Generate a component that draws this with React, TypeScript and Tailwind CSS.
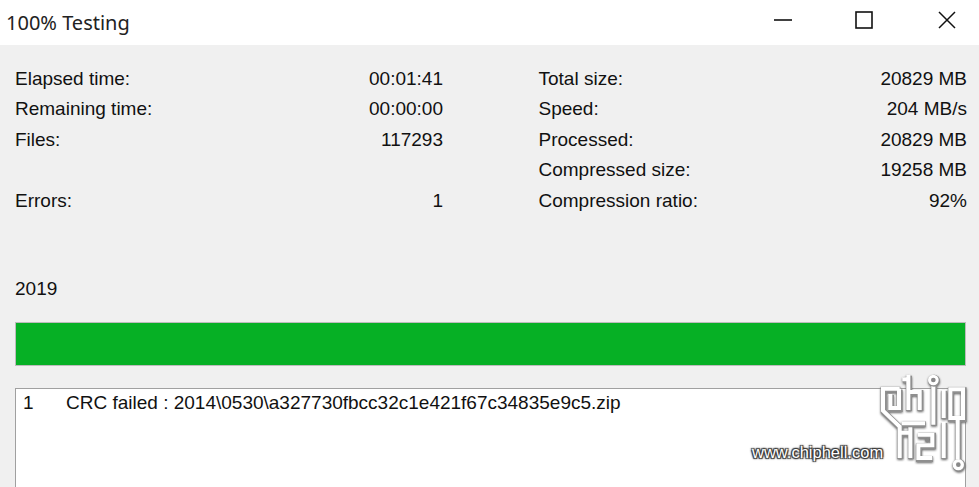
import React from "react";

const left = [
  ["Elapsed time:", "00:01:41"],
  ["Remaining time:", "00:00:00"],
  ["Files:", "117293"],
  ["", ""],
  ["Errors:", "1"],
];
const right = [
  ["Total size:", "20829 MB"],
  ["Speed:", "204 MB/s"],
  ["Processed:", "20829 MB"],
  ["Compressed size:", "19258 MB"],
  ["Compression ratio:", "92%"],
];

function Rows({ rows, className }: { rows: string[][]; className: string }) {
  return (
    <div className={className}>
      {rows.map((r, i) => (
        <div key={i} className="flex justify-between h-[30.4px] leading-[30px]">
          <span>{r[0]}</span>
          <span>{r[1]}</span>
        </div>
      ))}
    </div>
  );
}

function Logo() {
  const d =
    "M74 62H24V128L74 176V270M72 62V120H46V78M100 20V126M100 72H134V126M82 34H100M175 40V170M206 66V150M226 64H264V150H226ZM80 166H150M106 178V270M74 194H106M128 200H172V232H130V270H172M206 162V270M248 156V286";
  return (
    <svg
      className="absolute left-[875px] top-[368px] drop-shadow-[0.5px_1px_1px_#666]"
      width="100"
      height="108"
      viewBox="0 0 300 324"
      fill="none"
    >
      <path d={d} stroke="#8f8f8f" strokeWidth="18" transform="translate(2 3)" />
      <path d={d} stroke="#fff" strokeWidth="12" />
      <circle cx="177" cy="38" r="18" fill="#8f8f8f" />
      <circle cx="175" cy="36" r="16" fill="#fff" />
      <circle cx="175" cy="36" r="7" fill="#888" />
      <circle cx="252" cy="292" r="19" fill="#8f8f8f" />
      <circle cx="250" cy="290" r="17" fill="#fff" />
      <circle cx="250" cy="290" r="7" fill="#888" />
      <circle cx="157" cy="216" r="7" fill="#888" />
    </svg>
  );
}

export default function App() {
  return (
    <div className="relative w-[979px] h-[487px] overflow-hidden bg-[#f0f0f0] text-[#111] font-['Liberation_Sans',sans-serif] text-[19px]">
      <div className="h-[45px] bg-white flex justify-between">
        <span className="pl-[6px] pt-[8px] font-['Noto_Sans',sans-serif] text-[20px] text-[#222]">100% Testing</span>
        <div className="flex pt-[11px] pr-[23px]">
          <svg width="18" height="18" viewBox="0 0 18 18"><path d="M0 9h18" stroke="#111" strokeWidth="1.6" /></svg>
          <svg className="ml-[63px]" width="18" height="18" viewBox="0 0 18 18" fill="none"><rect x="1" y="1" width="16" height="16" stroke="#111" strokeWidth="1.6" /></svg>
          <svg className="ml-[65px]" width="18" height="18" viewBox="0 0 18 18" fill="none"><path d="M1 1l16 16M17 1L1 17" stroke="#111" strokeWidth="1.5" /></svg>
        </div>
      </div>
      <div className="flex pl-[15px] pt-[19px]">
        <Rows rows={left} className="w-[428px]" />
        <Rows rows={right} className="ml-[95.5px] w-[428.5px]" />
      </div>
      <div className="pl-[15px] mt-[58.5px] h-[30px] leading-[30px]">2019</div>
      <div className="mx-[13px] ml-[15px] mt-[17.5px] h-[44px] bg-[#06b025] border border-[#bcbcbc]" />
      <div className="ml-[15px] mr-[13px] mt-[22px] h-[120px] bg-white border border-[#a0a0a0] flex pt-[2px] leading-[24px]">
        <span className="pl-[7px] w-[50px]">1</span>
        <span>CRC failed : 2014\0530\a327730fbcc32c1e421f67c34835e9c5.zip</span>
      </div>
      <Logo />
      <span className="absolute left-[752px] top-[442px] text-[16.5px] leading-[20px] text-white font-['Liberation_Sans',sans-serif] [text-shadow:1px_1px_1px_#333,-1px_-1px_1px_#333,1px_-1px_1px_#333,-1px_1px_1px_#333,0_0_3px_#333]">www.chiphell.com</span>
    </div>
  );
}
